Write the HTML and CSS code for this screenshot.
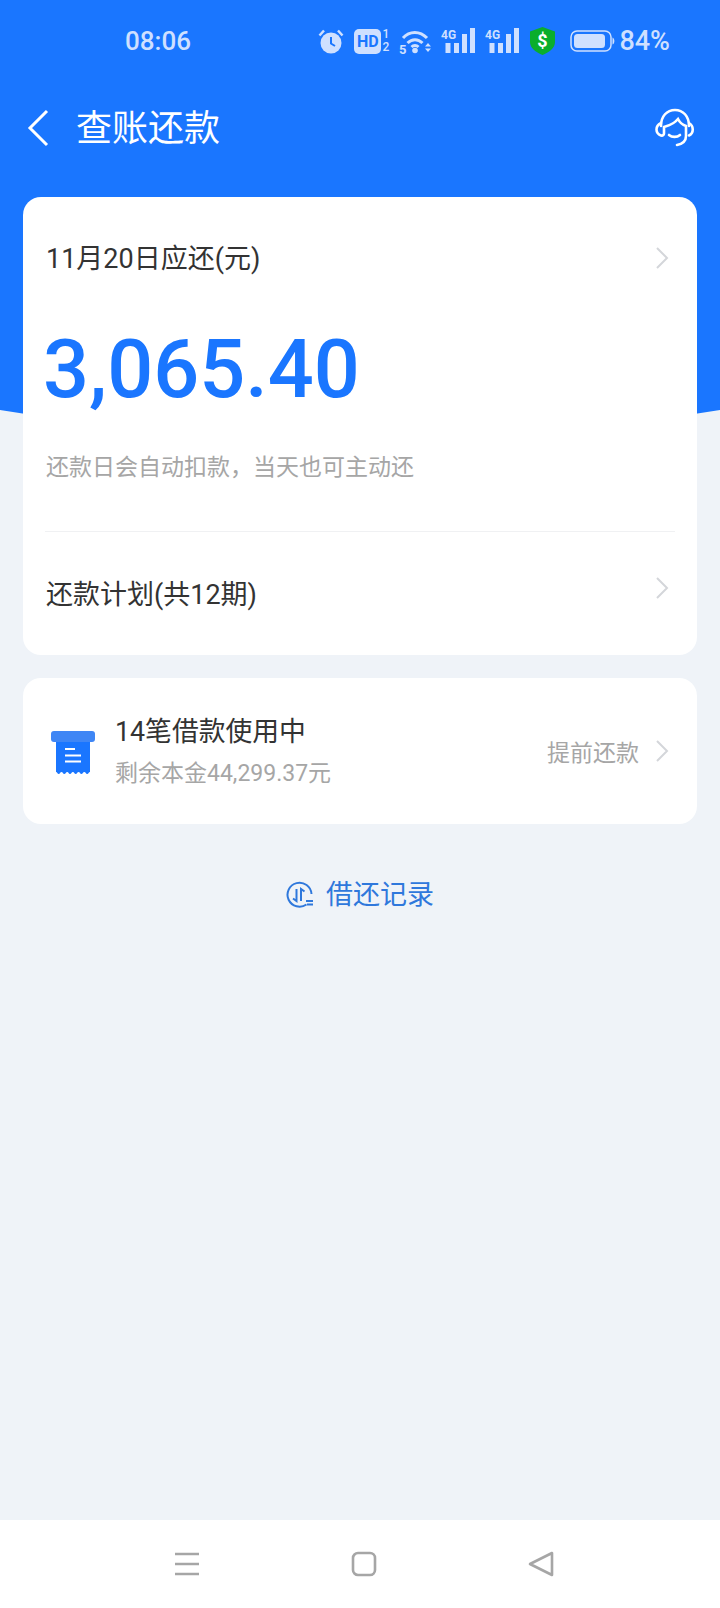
FILE: index.html
```html
<!DOCTYPE html>
<html lang="zh-CN">
<head>
<meta charset="utf-8">
<title>查账还款</title>
<link rel="stylesheet" href="styles.css">
</head>
<body>
<div class="phone">
  <div class="hero-bg"></div>
  <div class="status">
    <span class="time">08:06</span>
    <div class="status-icons">
      <svg class="si" width="26" height="26" viewBox="0 0 26 26"><circle cx="13" cy="15" r="10.500" fill="#cfe0ff"/><path d="M13 9v6.500l4 2.500" fill="none" stroke="#1a76ff" stroke-width="2"/><path d="M1.500 7.500l4.500-5M24.500 7.500l-4.500-5" stroke="#cfe0ff" stroke-width="2.500"/></svg>
      <div class="hd"><span class="hd-box">HD</span><div class="hd-num"><span>1</span><span>2</span></div></div>
      <svg class="si" width="32" height="26" viewBox="0 0 32 26"><path d="M4 10c6.500-7.500 17-7.500 24 0M8.500 15c4.500-4.500 10.500-4.500 15 0M12.500 19c2-2 5-2 7 0" fill="none" stroke="#cfe0ff" stroke-width="3"/><circle cx="16" cy="22.500" r="2.800" fill="#cfe0ff"/><path d="M26 18.500l3-3.500 3 3.500zM26 20.500l3 3.500 3-3.500z" fill="#cfe0ff"/><text x="0" y="25.500" class="tiny five">5</text></svg>
      <svg class="si" width="34" height="26" viewBox="0 0 34 26"><text x="0" y="11" class="tiny">4G</text><path d="M4.500 15h5v10h-5zM13 15h5v10h-5zM21 6h5v19h-5zM29 0h5v25h-5z" fill="#cfe0ff"/></svg>
      <svg class="si" width="34" height="26" viewBox="0 0 34 26"><text x="0" y="11" class="tiny">4G</text><path d="M4.500 15h5v10h-5zM13 15h5v10h-5zM21 6h5v19h-5zM29 0h5v25h-5z" fill="#cfe0ff"/></svg>
      <svg class="si" width="27" height="28" viewBox="0 0 27 28"><path d="M13.500 0L26 4.500V15c0 6.500-6.500 10.500-12.500 13C7.500 25.500 1 21.500 1 15V4.500z" fill="#0aae2c"/><text x="13.500" y="20" class="dollar">$</text></svg>
      <svg class="si batt" width="45" height="22" viewBox="0 0 45 22"><rect x="1" y="1" width="40" height="20" rx="6" fill="none" stroke="#cfe0ff" stroke-width="1.500"/><rect x="4" y="4" width="31" height="14" rx="3.500" fill="#cfe0ff"/><path d="M42.500 7.500c2.500 1 2.500 6 0 7z" fill="#cfe0ff"/></svg>
      <span class="pct">84%</span>
    </div>
  </div>
  <header class="nav">
    <svg class="back" width="24" height="38" viewBox="0 0 24 38"><path d="M21 2L4 19l17 17" fill="none" stroke="#fff" stroke-width="3"/></svg>
    <h1 class="title">查账还款</h1>
    <svg class="service" width="42" height="42" viewBox="0 0 42 42"><g fill="none" stroke="#fff" stroke-width="2.600" stroke-linecap="round"><path d="M7 19C7 9 13 3 21 3s14 6 14 16"/><path d="M7 16c-6 3-6 10 0 12.500 2 .5 3-1 3-2V20c3-1 9-2 14-8 2 4 5 6 8 7v10c0 5-4 8-9 9"/><path d="M35 16c5 3 5 10 0 12.500"/><path d="M15 28c3 2.500 8 2.500 11 0"/></g></svg>
  </header>
  <main class="content">
    <section class="card due-card">
      <div class="row due-head">
        <span class="label">11月20日应还(元)</span>
        <svg class="chev" width="14" height="24" viewBox="0 0 14 24"><path d="M2 2l10 10L2 22" fill="none" stroke="#d4d6da" stroke-width="2"/></svg>
      </div>
      <div class="amount">3,065.40</div>
      <p class="hint">还款日会自动扣款，当天也可主动还</p>
      <div class="divider"></div>
      <div class="row plan">
        <span class="label">还款计划(共12期)</span>
        <svg class="chev" width="14" height="24" viewBox="0 0 14 24"><path d="M2 2l10 10L2 22" fill="none" stroke="#d4d6da" stroke-width="2"/></svg>
      </div>
    </section>
    <section class="card loan-card">
      <svg class="receipt" width="44" height="44" viewBox="0 0 44 44"><path d="M5 9h34v32c-1.400 0-1.400 2-2.800 2s-1.500-2-2.900-2-1.500 2-2.900 2-1.400-2-2.800-2-1.500 2-2.900 2-1.400-2-2.800-2-1.500 2-2.900 2-1.400-2-2.800-2-1.500 2-2.900 2-1.400-2-2.800-2-1.400 2-2.800 2S6.400 41 5 41z" fill="#1a76ff"/><rect x="0" y="0" width="44" height="11" rx="3" fill="#3f86f5"/><path d="M14 18h10M14 24.500h16M14 30.500h16" stroke="#fff" stroke-width="2.200"/></svg>
      <div class="loan-text">
        <div class="loan-title">14笔借款使用中</div>
        <div class="loan-sub">剩余本金44,299.37元</div>
      </div>
      <span class="prepay">提前还款</span>
      <svg class="chev" width="14" height="24" viewBox="0 0 14 24"><path d="M2 2l10 10L2 22" fill="none" stroke="#d4d6da" stroke-width="2"/></svg>
    </section>
    <div class="history">
      <svg width="28" height="28" viewBox="0 0 28 28"><path d="M20.500 23.500A12 12 0 1 1 25.500 13" fill="none" stroke="#2f78dc" stroke-width="2"/><path d="M7 17.500l3.500 2.500V8M15 20V8l3.500 2.500M20 20h7M21 23.500h6" fill="none" stroke="#2f78dc" stroke-width="2"/></svg>
      <span>借还记录</span>
    </div>
  </main>
  <footer class="sysnav">
    <svg width="26" height="24" viewBox="0 0 26 24"><path d="M1 2h24M1 12h24M1 22h24" stroke="#a6a6a6" stroke-width="2.600"/></svg>
    <svg width="26" height="26" viewBox="0 0 26 26"><rect x="2" y="2" width="22" height="22" rx="5" fill="none" stroke="#a6a6a6" stroke-width="2.600"/></svg>
    <svg width="26" height="28" viewBox="0 0 26 28"><path d="M24 3v22L2 14z" fill="none" stroke="#a6a6a6" stroke-width="2.600" stroke-linejoin="round"/></svg>
  </footer>
</div>
</body>
</html>
```
FILE: styles.css
```css
* { box-sizing: border-box; }
html, body { margin: 0; padding: 0; }
body { font-family: Roboto, "Noto Sans CJK SC", sans-serif; }
.phone {
  position: relative;
  width: 720px;
  height: 1608px;
  background: #eff3f8;
  display: flex;
  flex-direction: column;
  overflow: hidden;
}
.hero-bg {
  position: absolute;
  left: -140px;
  top: 0;
  width: 1000px;
  height: 435px;
  border-radius: 0 0 500px 500px / 0 0 82px 82px;
  background: #1a76ff;
}
.status, .nav, .content, .sysnav { position: relative; }
.status {
  height: 82px;
  padding: 0 50px 0 125px;
  display: flex;
  align-items: center;
  justify-content: space-between;
  color: #cfe0ff;
}
.time { font-size: 26px; font-weight: 500; }
.status-icons { display: flex; align-items: center; gap: 10px; }
.si { display: block; }
.tiny { font: 700 12px Roboto, sans-serif; fill: #cfe0ff; }
.five { font-size: 13px; }
.dollar { font: 700 18px Roboto, sans-serif; fill: #fff; text-anchor: middle; }
.hd { display: flex; align-items: center; gap: 1px; }
.hd-box {
  width: 27px;
  height: 25px;
  border-radius: 5px;
  background: #cfe0ff;
  color: #1a76ff;
  font-size: 16px;
  font-weight: 700;
  line-height: 25px;
  text-align: center;
}
.hd-num {
  display: flex;
  flex-direction: column;
  width: 7px;
  font-size: 12px;
  line-height: 13px;
  font-weight: 500;
}
.batt { margin-left: 4px; margin-right: -6px; }
.pct { font-size: 27px; font-weight: 500; }
.nav {
  height: 92px;
  padding: 0 24px 0 26px;
  display: flex;
  align-items: center;
  color: #fff;
}
.title {
  margin: 0 0 6px 26px;
  font-size: 36px;
  font-weight: 400;
  flex: 1;
}
.content {
  flex: 1;
  padding: 23px 23px 0;
  display: flex;
  flex-direction: column;
}
.card { background: #fff; border-radius: 18px; }
.due-card { height: 458px; padding: 0 22px; }
.row { display: flex; align-items: center; justify-content: space-between; }
.label { font-size: 27px; color: #333; }
.due-head { height: 122px; padding: 0 6px 0 1px; }
.due-head .label { margin-bottom: 4px; }
.amount {
  margin: 6px 0 0 -2px;
  height: 90px;
  font-size: 81px;
  line-height: 90px;
  font-weight: 500;
  color: #1a76ff;
}
.hint {
  margin: 36px 0 0;
  padding-left: 1px;
  font-size: 23px;
  line-height: 34px;
  color: #a6a6a6;
}
.divider { margin-top: 46px; height: 1px; background: #f0f1f3; }
.plan { height: 112px; padding: 0 6px 0 1px; }
.plan .label { margin-top: 8px; }
.loan-card {
  margin-top: 23px;
  height: 146px;
  padding: 0 28px;
  display: flex;
  align-items: center;
}
.receipt { margin-top: 4px; }
.loan-text { margin-left: 20px; padding-top: 1px; flex: 1; }
.loan-title { font-size: 26.800px; line-height: 38px; color: #333; }
.loan-sub { margin-top: 7px; font-size: 23px; line-height: 32px; color: #a6a6a6; }
.prepay { margin-right: 16px; font-size: 23px; color: #a6a6a6; }
.history {
  margin-top: 51px;
  display: flex;
  align-items: center;
  justify-content: center;
  gap: 12px;
  font-size: 27px;
  line-height: 40px;
  color: #2f78dc;
}
.sysnav {
  height: 88px;
  background: #fff;
  padding: 0 166px 0 174px;
  display: flex;
  align-items: center;
  justify-content: space-between;
}
```
